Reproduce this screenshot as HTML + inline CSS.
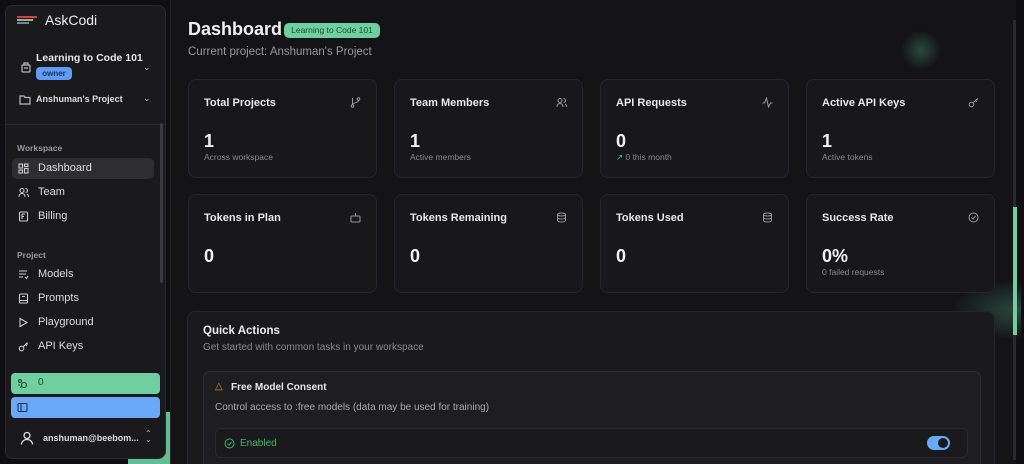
<!DOCTYPE html>
<html style="overflow:hidden;height:464px"><head><style>
*{box-sizing:border-box;margin:0;padding:0}
body{width:1024px;height:464px;overflow:hidden;background:#0f0f11;font-family:"Liberation Sans",sans-serif;color:#eee;position:relative}
.sb{position:absolute;left:5px;top:5px;width:161px;height:454px;background:#1a1a1d;border:1px solid #2a2a2e;border-radius:8px;overflow:hidden}
.main{position:absolute;left:170px;top:0;width:846px;height:464px;background:#141417;border-left:1px solid #222}
.card{position:absolute;width:189px;height:99px;background:#18181b;border:1px solid #26262a;border-radius:8px}
.card .t{position:absolute;left:15px;top:17px;font-size:11px;font-weight:bold;color:#e8e8e8}
.card .v{position:absolute;left:15px;top:51px;font-size:18px;font-weight:bold;color:#f2f2f2}
.card .s{position:absolute;left:15px;top:72px;font-size:8.5px;color:#8a8a8e}
.card svg{position:absolute;right:15px;top:17px}
.nav{position:absolute;left:6px;width:142px;height:21px;border-radius:5px;font-size:11px;color:#ddd;padding-left:26px;line-height:21px}
.nav svg{position:absolute;left:6px;top:5px}
.lbl{position:absolute;left:11px;font-size:8.5px;color:#999;font-weight:bold}
</style></head><body>
<div style="position:absolute;left:128px;top:412px;width:44px;height:52px;background:#5fbf92"></div>
<div class="sb">
 <div style="position:absolute;left:11px;top:10px;width:20px;height:9px">
  <div style="height:2px;width:20px;background:#c44;margin-bottom:1px"></div>
  <div style="height:2px;width:16px;background:#aa8;margin-bottom:1px"></div>
  <div style="height:2px;width:12px;background:#68a"></div></div>
 <div style="position:absolute;left:39px;top:6px;font-size:14px;color:#eee">AskCodi</div>
 <svg style="position:absolute;left:14px;top:55px" width="12" height="12" viewBox="0 0 12 12" fill="none" stroke="#bbb" stroke-width="1.2"><rect x="2" y="4" width="8" height="7" rx="1"/><path d="M4 4V2h4v2M4 7h4"/></svg>
 <div style="position:absolute;left:30px;top:46px;font-size:10.5px;font-weight:bold;color:#e8e8e8">Learning to Code 101</div>
 <div style="position:absolute;left:30px;top:61px;width:36px;height:13px;background:#5f9cf5;border-radius:4px;font-size:8px;color:#1a3560;text-align:center;line-height:13px;font-weight:bold">owner</div>
 <div style="position:absolute;left:137px;top:56px;font-size:9px;color:#bbb">&#8964;</div>
 <svg style="position:absolute;left:13px;top:88px" width="12" height="11" viewBox="0 0 12 11" fill="none" stroke="#bbb" stroke-width="1.2"><path d="M1 2h4l1 1.5h5v6.5H1z"/></svg>
 <div style="position:absolute;left:30px;top:88px;font-size:9px;font-weight:bold;color:#ddd">Anshuman's Project</div>
 <div style="position:absolute;left:137px;top:87px;font-size:9px;color:#bbb">&#8964;</div>
 <div style="position:absolute;left:0;top:118px;width:161px;height:1px;background:#2a2a2e"></div>
 <div style="position:absolute;left:154px;top:117px;width:3px;height:160px;background:#3a3a3e;border-radius:2px"></div>
 <div class="lbl" style="top:137px">Workspace</div>
 <div class="nav" style="top:152px;background:#2e2e32"><svg width="11" height="11" viewBox="0 0 11 11" fill="none" stroke="#ccc" stroke-width="1.1"><rect x="1" y="1" width="3.5" height="4"/><rect x="6.5" y="1" width="3.5" height="2.5"/><rect x="1" y="7" width="3.5" height="3"/><rect x="6.5" y="5.5" width="3.5" height="4.5"/></svg>Dashboard</div>
 <div class="nav" style="top:176px"><svg width="11" height="11" viewBox="0 0 11 11" fill="none" stroke="#ccc" stroke-width="1.1"><circle cx="4" cy="3.5" r="2"/><path d="M1 10c0-2.5 1.5-3.5 3-3.5s3 1 3 3.5M7.5 1.5a2 2 0 010 4M9 7c1 .5 1.5 1.5 1.5 3"/></svg>Team</div>
 <div class="nav" style="top:200px"><svg width="11" height="11" viewBox="0 0 11 11" fill="none" stroke="#ccc" stroke-width="1.1"><rect x="1.5" y="1" width="8" height="9" rx="1"/><path d="M4 3h3M4 5.5h2M4 3v5"/></svg>Billing</div>
 <div class="lbl" style="top:244px">Project</div>
 <div class="nav" style="top:258px"><svg width="11" height="11" viewBox="0 0 11 11" fill="none" stroke="#ccc" stroke-width="1.1"><path d="M1 2h8M1 5h7M1 8h4M7 8l1.5 1.5L10 7"/></svg>Models</div>
 <div class="nav" style="top:282px"><svg width="11" height="11" viewBox="0 0 11 11" fill="none" stroke="#ccc" stroke-width="1.1"><rect x="1.5" y="1" width="8" height="9" rx="1"/><path d="M1.5 7.5h8M4 3.5h3"/></svg>Prompts</div>
 <div class="nav" style="top:306px"><svg width="11" height="11" viewBox="0 0 11 11" fill="none" stroke="#ccc" stroke-width="1.1"><path d="M2 1.5l7 4-7 4z"/></svg>Playground</div>
 <div class="nav" style="top:330px"><svg width="11" height="11" viewBox="0 0 11 11" fill="none" stroke="#ccc" stroke-width="1.1"><circle cx="3.5" cy="7.5" r="2.3"/><path d="M5.2 5.8L9.5 1.5M7.5 3.5l1.3 1.3M8.7 2.3l1 1"/></svg>API Keys</div>
 <div style="position:absolute;left:5px;top:367px;width:149px;height:21px;background:#6fcf9f;border-radius:4px"><svg style="position:absolute;left:6px;top:5px" width="11" height="11" viewBox="0 0 11 11" fill="none" stroke="#1e4a35" stroke-width="1.1"><circle cx="3" cy="3" r="1.5"/><circle cx="7" cy="7" r="2.5"/><path d="M1 7h2M3 9.5l2-1"/></svg><span style="position:absolute;left:27px;top:4px;font-size:10px;color:#1e4a35">0</span></div>
 <div style="position:absolute;left:5px;top:391px;width:149px;height:21px;background:#6aa9f7;border-radius:4px"><svg style="position:absolute;left:6px;top:5px" width="11" height="11" viewBox="0 0 11 11" fill="none" stroke="#1a3560" stroke-width="1.1"><rect x="1" y="1.5" width="9" height="8" rx="1"/><path d="M4 1.5v8"/></svg></div>
 <svg style="position:absolute;left:14px;top:425px" width="14" height="14" viewBox="0 0 14 14" fill="none" stroke="#ddd" stroke-width="1.3"><circle cx="7" cy="4.5" r="3"/><path d="M1.5 13.5c0-3 2.5-5 5.5-5s5.5 2 5.5 5"/></svg>
 <div style="position:absolute;left:37px;top:427px;font-size:9px;color:#ddd;font-weight:bold">anshuman@beebom...</div>
 <div style="position:absolute;left:139px;top:425px;font-size:8px;color:#bbb;line-height:6px">&#8963;<br>&#8964;</div>
</div>
<div class="main">
 <div style="position:absolute;left:730px;top:30px;width:40px;height:40px;border-radius:50%;background:radial-gradient(#2a4a3a,transparent 70%)"></div>
 <div style="position:absolute;left:780px;top:280px;width:70px;height:60px;background:radial-gradient(ellipse at 100% 50%,#2a4a3d,transparent 70%)"></div>
 <div style="position:absolute;left:17px;top:19px;font-size:18px;font-weight:bold;color:#f2f2f2">Dashboard</div>
 <div style="position:absolute;left:113px;top:23px;width:96px;height:15px;background:#6fcf9f;border-radius:5px;font-size:8.5px;color:#1e4a35;text-align:center;line-height:15px">Learning to Code 101</div>
 <div style="position:absolute;left:17px;top:46px;font-size:11.5px;color:#999">Current project: Anshuman's Project</div>
 <div style="position:absolute;left:842px;top:20px;width:3px;height:440px;background:#2a2a2e"></div>
 <div style="position:absolute;left:842px;top:207px;width:4px;height:128px;background:#6fcf9f"></div>
</div>
<div class="card" style="left:188px;top:79px"><div class="t">Total Projects</div><svg width="11" height="11" viewBox="0 0 11 11" fill="none" stroke="#999" stroke-width="1"><circle cx="2.5" cy="9" r="1.3"/><circle cx="8.5" cy="2" r="1.3"/><path d="M2.5 1v6.5M8.5 3.3c0 3-6 2-6 4.4"/></svg><div class="v">1</div><div class="s">Across workspace</div></div>
<div class="card" style="left:394px;top:79px"><div class="t">Team Members</div><svg width="11" height="11" viewBox="0 0 11 11" fill="none" stroke="#999" stroke-width="1"><circle cx="4" cy="3.5" r="2"/><path d="M1 10c0-2.5 1.5-3.5 3-3.5s3 1 3 3.5M7.5 1.5a2 2 0 010 4M9 7c1 .5 1.5 1.5 1.5 3"/></svg><div class="v">1</div><div class="s">Active members</div></div>
<div class="card" style="left:600px;top:79px"><div class="t">API Requests</div><svg width="11" height="11" viewBox="0 0 11 11" fill="none" stroke="#999" stroke-width="1"><path d="M0.5 6h2l2-5 2 9 2-4h2"/></svg><div class="v">0</div><div class="s"><span style="color:#3c9">&#8599;</span> 0 this month</div></div>
<div class="card" style="left:806px;top:79px"><div class="t">Active API Keys</div><svg width="11" height="11" viewBox="0 0 11 11" fill="none" stroke="#999" stroke-width="1"><circle cx="3.5" cy="7.5" r="2.3"/><path d="M5.2 5.8L9.5 1.5M7.5 3.5l1.3 1.3M8.7 2.3l1 1"/></svg><div class="v">1</div><div class="s">Active tokens</div></div>
<div class="card" style="left:188px;top:194px"><div class="t">Tokens in Plan</div><svg width="11" height="11" viewBox="0 0 11 11" fill="none" stroke="#999" stroke-width="1"><rect x="1" y="4" width="9" height="6" rx="1"/><path d="M5.5 1v3M3.5 7h.1M7.5 7h.1"/></svg><div class="v">0</div></div>
<div class="card" style="left:394px;top:194px"><div class="t">Tokens Remaining</div><svg width="11" height="11" viewBox="0 0 11 11" fill="none" stroke="#999" stroke-width="1"><ellipse cx="5.5" cy="2.5" rx="4" ry="1.5"/><path d="M1.5 2.5v6c0 .8 1.8 1.5 4 1.5s4-.7 4-1.5v-6M1.5 5.5c0 .8 1.8 1.5 4 1.5s4-.7 4-1.5"/></svg><div class="v">0</div></div>
<div class="card" style="left:600px;top:194px"><div class="t">Tokens Used</div><svg width="11" height="11" viewBox="0 0 11 11" fill="none" stroke="#999" stroke-width="1"><ellipse cx="5.5" cy="2.5" rx="4" ry="1.5"/><path d="M1.5 2.5v6c0 .8 1.8 1.5 4 1.5s4-.7 4-1.5v-6M1.5 5.5c0 .8 1.8 1.5 4 1.5s4-.7 4-1.5"/></svg><div class="v">0</div></div>
<div class="card" style="left:806px;top:194px"><div class="t">Success Rate</div><svg width="11" height="11" viewBox="0 0 11 11" fill="none" stroke="#999" stroke-width="1"><circle cx="5.5" cy="5.5" r="4.5"/><path d="M3.5 5.5l1.5 1.5 2.5-3"/></svg><div class="v">0%</div><div class="s">0 failed requests</div></div>
<div style="position:absolute;left:187px;top:311px;width:808px;height:153px;background:#1a1a1d;border:1px solid #26262a;border-bottom:none;border-radius:8px 8px 0 0;overflow:hidden">
 <div style="position:absolute;left:15px;top:13px;font-size:11.5px;font-weight:bold;color:#eee">Quick Actions</div>
 <div style="position:absolute;left:15px;top:30px;font-size:10px;color:#8a8a8e">Get started with common tasks in your workspace</div>
 <div style="position:absolute;left:15px;top:59px;width:778px;height:110px;background:#1e1e21;border:1px solid #2c2c30;border-radius:7px">
  <div style="position:absolute;left:11px;top:9px;font-size:10px;color:#e08a3c">&#9651;</div>
  <div style="position:absolute;left:27px;top:10px;font-size:10px;font-weight:bold;color:#e8e8e8">Free Model Consent</div>
  <div style="position:absolute;left:11px;top:30px;font-size:10px;color:#aaa">Control access to :free models (data may be used for training)</div>
  <div style="position:absolute;left:11px;top:56px;width:753px;height:30px;background:#1a1a1d;border:1px solid #2a2a2e;border-radius:6px">
   <svg style="position:absolute;left:8px;top:9px" width="11" height="11" viewBox="0 0 11 11" fill="none" stroke="#3bb56a" stroke-width="1"><circle cx="5.5" cy="5.5" r="4.5"/><path d="M3.5 5.5l1.5 1.5 2.5-3"/></svg>
   <div style="position:absolute;left:24px;top:9px;font-size:10px;color:#3bb56a">Enabled</div>
   <div style="position:absolute;left:711px;top:7px;width:23px;height:14px;border-radius:7px;background:#6aa9f7"><div style="position:absolute;right:2px;top:2px;width:10px;height:10px;border-radius:50%;background:#1a1a1d"></div></div>
  </div>
 </div>
</div>
</body></html>
